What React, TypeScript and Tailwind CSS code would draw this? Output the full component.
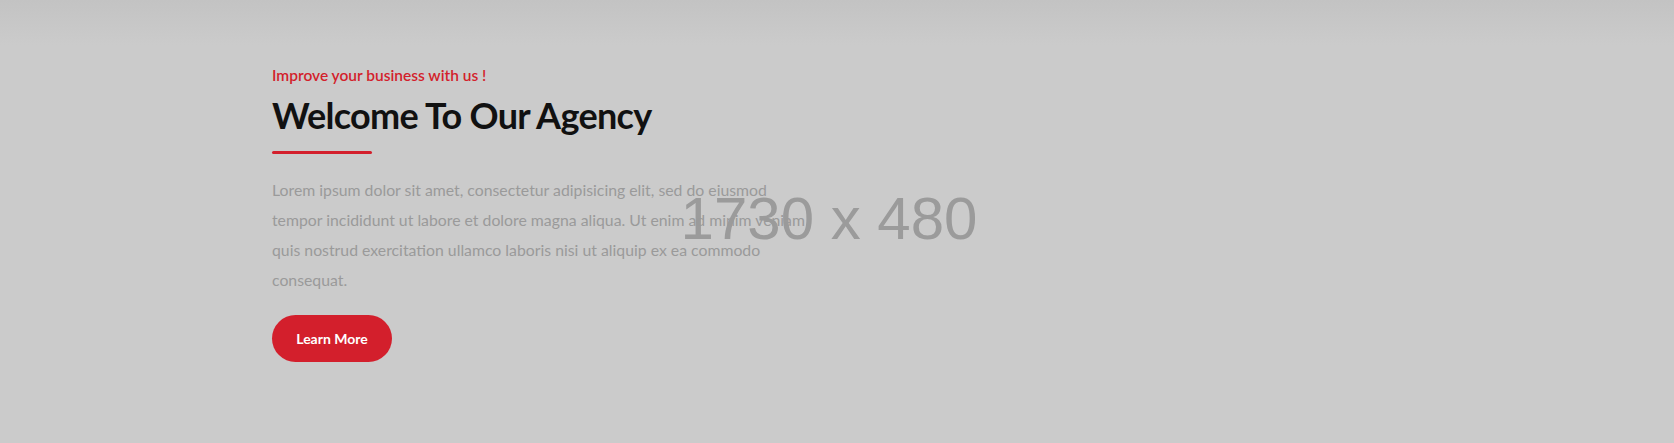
export default function App() {
  return (
    <section className="relative h-[443px] w-full overflow-hidden bg-[linear-gradient(to_bottom,#c3c3c3_0px,#cbcbcb_45px,#cbcbcb_100%)] font-['Lato','Noto_Sans',sans-serif]">
      {/* placeholder image label */}
      <div className="absolute inset-0 flex items-center justify-center pr-[16px] pb-[6px]">
        <span className="font-['Liberation_Sans',Arial,sans-serif] text-[60px] text-[#9b9b9b]">1730 x 480</span>
      </div>

      <div className="relative z-10 flex flex-col items-start pl-[272px] pt-[63px]">
        <h4 className="text-[15.5px] font-semibold leading-6 text-[#d31f2c]">Improve your business with us !</h4>
        <h2 className="mt-[6px] text-[36px] font-bold leading-[44px] tracking-[-0.7px] text-[#111111]">Welcome To Our Agency</h2>
        <span className="mt-[14px] h-[3px] w-[100px] rounded-full bg-[#d31f2c]" />
        <p className="mt-[21px] w-[580px] text-[15.8px] leading-[30px] text-[#9a9a9a]">
          Lorem ipsum dolor sit amet, consectetur adipisicing elit, sed do eiusmod
          <br />
          tempor incididunt ut labore et dolore magna aliqua. Ut enim ad minim veniam
          <br />
          quis nostrud exercitation ullamco laboris nisi ut aliquip ex ea commodo
          <br />
          consequat.
        </p>
        <button className="mt-[20px] h-[47px] w-[120px] rounded-full bg-[#d31f2c] text-[14px] font-bold text-white">
          Learn More
        </button>
      </div>
    </section>
  );
}
